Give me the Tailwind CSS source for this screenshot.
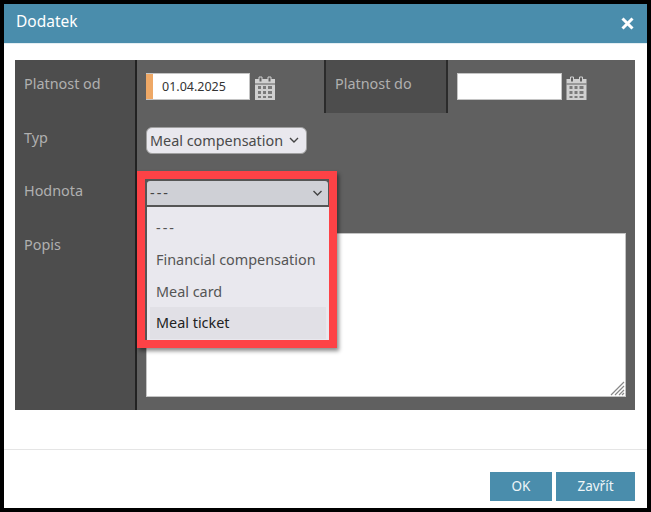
<!DOCTYPE html>
<html>
<head>
<meta charset="utf-8">
<script src="https://cdn.jsdelivr.net/npm/@tailwindcss/browser@4"></script>
</head>
<body class="bg-black font-['Noto_Sans','Open_Sans',sans-serif]">
<div class="relative m-1 flex h-[504px] w-[643px] flex-col bg-white">
  <header class="flex h-10 shrink-0 items-center justify-between border-b border-[#e3eef3] bg-[#4a8dac] pl-3 pr-[13px]">
    <h1 class="mb-[3px] text-[15.5px] leading-none text-white">Dodatek</h1>
    <svg width="13" height="13" viewBox="0 0 13 13"><path d="M1.5 1.5L11.5 11.5M11.5 1.5L1.5 11.5" stroke="#fff" stroke-width="3"/></svg>
  </header>

  <section class="mx-[11px] mt-[16px] grid h-[350px] w-[620px] grid-cols-[122px_1fr] bg-[#606060] text-[14.4px]">
    <div class="flex flex-col border-r-2 border-[#222] bg-[#4d4d4d] pl-[9px] pt-[14px] leading-5 text-[#b0b0b0]">
      <div class="h-[54px]">Platnost od</div>
      <div class="h-[53px]">Typ</div>
      <div class="h-[54px]">Hodnota</div>
      <div>Popis</div>
    </div>
    <div class="flex flex-col">
      <div class="flex h-[53px] items-start">
        <div class="ml-[9px] mt-[13px] flex h-[27px] w-[104px] border border-l-0 border-[#c4c4c4] bg-white">
          <div class="w-[7px] shrink-0 bg-[#eea866]"></div>
          <div class="pl-[9px] text-[12.5px] leading-[26px] text-[#333]">01.04.2025</div>
        </div>
        <svg class="ml-[5px] mt-[16px] shrink-0" width="20" height="24" viewBox="0 0 20 24">
          <path d="M0 3h20v21H0z" fill="#d0d0d0"/><path d="M0 8h20" stroke="#606060"/>
          <path d="M4 1h3v5H4zM13 1h3v5h-3z" fill="#606060" stroke="#d0d0d0"/>
          <g fill="#7a7a7a"><path d="M3 10h3v3H3zM8 10h3v3H8zM13 10h4v3h-4zM3 15h3v3H3zM8 15h3v3H8zM13 15h4v3h-4zM3 20h3v2H3zM8 20h3v2H8zM13 20h4v2h-4z"/></g>
        </svg>
        <div class="ml-[49px] flex h-[53px] w-[124px] shrink-0 border-x-2 border-[#2b2b2b] bg-[#4d4d4d] pl-[9px] pt-[14px] leading-5 text-[#b0b0b0]">Platnost do</div>
        <div class="ml-[9px] mt-[13px] h-[27px] w-[105px] shrink-0 border border-[#c4c4c4] bg-white"></div>
        <svg class="ml-[4px] mt-[16px] shrink-0" width="21" height="24" viewBox="0 0 20 24">
          <path d="M0 3h20v21H0z" fill="#d0d0d0"/><path d="M0 8h20" stroke="#606060"/>
          <path d="M4 1h3v5H4zM13 1h3v5h-3z" fill="#606060" stroke="#d0d0d0"/>
          <g fill="#7a7a7a"><path d="M3 10h3v3H3zM8 10h3v3H8zM13 10h4v3h-4zM3 15h3v3H3zM8 15h3v3H8zM13 15h4v3h-4zM3 20h3v2H3zM8 20h3v2H8zM13 20h4v2h-4z"/></g>
        </svg>
      </div>
      <div class="ml-[9px] mt-[14px] flex h-[27px] w-[161px] items-center justify-between rounded-md border border-[#a0a0a0] bg-[#e9e8ee] pl-[3px] pr-[7px] text-[#4a4a4a]">
        <span>Meal compensation</span>
        <svg width="10" height="7" viewBox="0 0 10 7"><path d="M1 1l4 4 4-4" fill="none" stroke="#444" stroke-width="1.4"/></svg>
      </div>
      <div class="relative ml-[9px] mt-[79px] h-[164px] w-[480px] border border-[#c4c4c4] bg-white">
        <svg class="absolute bottom-0 right-0" width="15" height="15" viewBox="0 0 15 15"><path d="M1 14L14 1M5 14L14 5M9 14l5-5M12 14l2-2" stroke="#888" stroke-width="1.2"/></svg>
      </div>
    </div>
  </section>

  <footer class="mt-[39px] flex flex-1 justify-end gap-1 border-t border-[#e5e5e5] pr-3 pt-[22px]">
    <button class="h-[29px] w-[62px] bg-[#4a8dac] text-[13.5px] text-[#eef5f8]">OK</button>
    <button class="h-[29px] w-[79px] bg-[#4a8dac] text-[13.5px] text-[#eef5f8]">Zavřít</button>
  </footer>

  <!-- open dropdown overlay with annotation frame -->
  <div class="absolute left-[133px] top-[167px] h-[177px] w-[200px] border-[8px] border-[#fd4246] bg-[#555] shadow-[2px_3px_4px_rgba(0,0,0,0.45)]">
    <div class="ml-[1px] mt-[1px] flex h-[27px] items-center justify-between rounded-t-[4px] border border-b-2 border-[#555] bg-[#cfd0d6] pl-[3px] pr-[5px] text-[14.4px] text-[#444]">
      <span class="tracking-[2px]">---</span>
      <svg width="11" height="7" viewBox="0 0 10 7"><path d="M1 1l4 4 4-4" fill="none" stroke="#444" stroke-width="1.4"/></svg>
    </div>
    <ul class="ml-[2px] h-[133px] bg-[#e9e8ee] px-[3px] pt-[5px] text-[14.4px] text-[#555]">
      <li class="h-[32px] pl-[6px] leading-[31px] tracking-[2px]">---</li>
      <li class="h-[32px] pl-[6px] leading-[31px]">Financial compensation</li>
      <li class="h-[31px] pl-[6px] leading-[31px]">Meal card</li>
      <li class="h-[32px] bg-[#e1e0e6] pl-[6px] leading-[31px] text-[#222]">Meal ticket</li>
    </ul>
  </div>
</div>
</body>
</html>
